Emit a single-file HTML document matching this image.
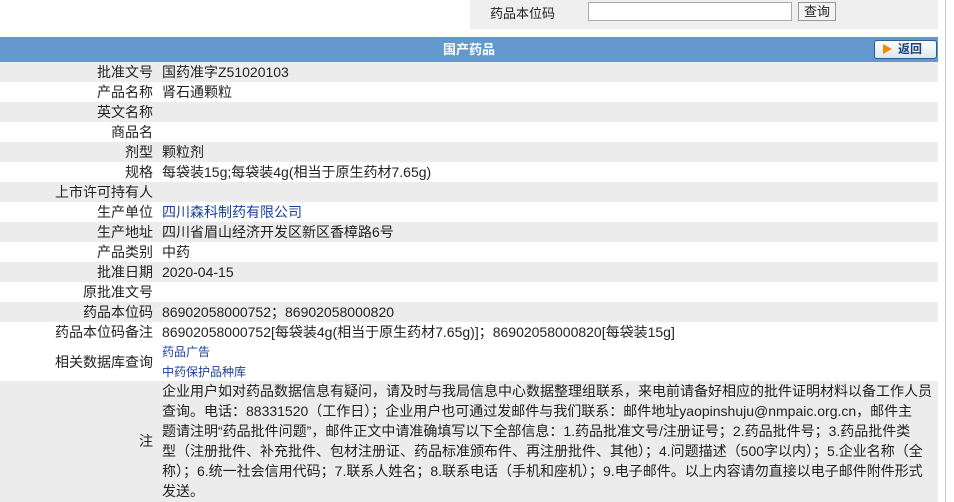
<!DOCTYPE html>
<html><head><meta charset="utf-8"><style>
body{margin:0;width:954px;height:502px;overflow:hidden;background:#fff;font-family:"Liberation Sans","Noto Sans CJK SC",sans-serif;font-size:14px;color:#222;position:relative}
.top{position:absolute;left:470px;top:0;width:468px;height:29px;background:#efefef}
.top .lb{position:absolute;left:20px;top:3px;font-size:13px}
.top input{position:absolute;left:118px;top:2px;width:204px;height:19px;border:1px solid #aaa;box-sizing:border-box;padding:0;margin:0}
.top .btn{position:absolute;left:328px;top:2px;width:38px;height:19px;border:1px solid #999;background:#f4f4f4;box-sizing:border-box;text-align:center;line-height:17px;font-size:13px}
.vl{position:absolute;left:945px;top:0;width:1px;height:502px;background:#c8c8c8}
.bar{position:absolute;left:0;top:37px;width:938px;height:25px;background:#6599cd;color:#fff;font-weight:bold;text-align:center;line-height:25px;font-size:13px}
.back{position:absolute;left:874px;top:40px;width:63px;height:19px;box-sizing:border-box;border:1px solid #2f5d8f;border-radius:3px;background:linear-gradient(#fff,#dfe6ee);color:#1c3f7a;font-weight:bold;font-size:12px;line-height:17px;text-align:left}
.back i{display:inline-block;width:0;height:0;border-left:9px solid #f08a00;border-top:5px solid transparent;border-bottom:5px solid transparent;margin:0 6px 0 8px;vertical-align:-1px}
.row{position:absolute;left:0;width:938px;height:20px;line-height:20px}
.g{background:#ececec}
.row .k{position:absolute;right:785px;top:0;white-space:nowrap}
.row .v{position:absolute;left:162px;top:0;white-space:nowrap}
a{color:#1a3f9a;text-decoration:none;font-size:12px}
.note{position:absolute;left:0;top:381px;width:938px;height:121px;background:#ececec}
.note .k{position:absolute;right:785px;top:50px}
.note .v{position:absolute;left:162px;top:0;width:776px;line-height:20px}
</style></head><body>
<div class="top"><span class="lb">药品本位码</span><input><div class="btn">查询</div></div>
<div class="vl"></div>
<div class="bar">国产药品</div>
<div class="back"><i></i>返回</div>
<div class="row g" style="top:62px"><span class="k">批准文号</span><span class="v">国药准字Z51020103</span></div>
<div class="row" style="top:82px"><span class="k">产品名称</span><span class="v">肾石通颗粒</span></div>
<div class="row g" style="top:102px"><span class="k">英文名称</span></div>
<div class="row" style="top:122px"><span class="k">商品名</span></div>
<div class="row g" style="top:142px"><span class="k">剂型</span><span class="v">颗粒剂</span></div>
<div class="row" style="top:162px"><span class="k">规格</span><span class="v">每袋装15g;每袋装4g(相当于原生药材7.65g)</span></div>
<div class="row g" style="top:182px"><span class="k">上市许可持有人</span></div>
<div class="row" style="top:202px"><span class="k">生产单位</span><span class="v"><a style="font-size:14px">四川森科制药有限公司</a></span></div>
<div class="row g" style="top:222px"><span class="k">生产地址</span><span class="v">四川省眉山经济开发区新区香樟路6号</span></div>
<div class="row" style="top:242px"><span class="k">产品类别</span><span class="v">中药</span></div>
<div class="row g" style="top:262px"><span class="k">批准日期</span><span class="v">2020-04-15</span></div>
<div class="row" style="top:282px"><span class="k">原批准文号</span></div>
<div class="row g" style="top:302px"><span class="k">药品本位码</span><span class="v">86902058000752；86902058000820</span></div>
<div class="row" style="top:322px"><span class="k">药品本位码备注</span><span class="v">86902058000752[每袋装4g(相当于原生药材7.65g)]；86902058000820[每袋装15g]</span></div>
<div class="row" style="top:342px;height:39px"><span class="k" style="top:10px">相关数据库查询</span><span class="v" style="line-height:19px"><a>药品广告</a><br><a>中药保护品种库</a></span></div>
<div class="note"><span class="k">注</span><div class="v">企业用户如对药品数据信息有疑问，请及时与我局信息中心数据整理组联系，来电前请备好相应的批件证明材料以备工作人员<br>查询。电话：88331520（工作日）；企业用户也可通过发邮件与我们联系：邮件地址yaopinshuju@nmpaic.org.cn，邮件主<br>题请注明“药品批件问题”，邮件正文中请准确填写以下全部信息：1.药品批准文号/注册证号；2.药品批件号；3.药品批件类<br>型（注册批件、补充批件、包材注册证、药品标准颁布件、再注册批件、其他）；4.问题描述（500字以内）；5.企业名称（全<br>称）；6.统一社会信用代码；7.联系人姓名；8.联系电话（手机和座机）；9.电子邮件。以上内容请勿直接以电子邮件附件形式<br>发送。</div></div>
</body></html>
